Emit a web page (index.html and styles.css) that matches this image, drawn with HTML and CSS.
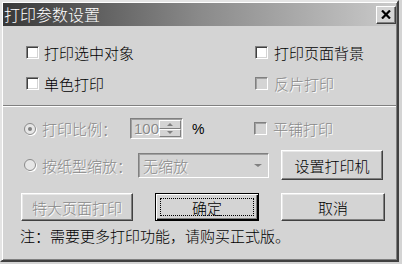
FILE: index.html
```
<!DOCTYPE html>
<html>
<head>
    <link rel="stylesheet" href="styles.css">
</head>
<body>
    <div class="window">
        <div class="titlebar">
            <span class="title">打印参数设置</span>
            <span class="close">
                <svg width="10" height="9" viewBox="0 0 10 9">
                    <path d="M1 0.5 L9 8.5 M9 0.5 L1 8.5" stroke="#000" stroke-width="2.2" fill="none"/>
                </svg>
            </span>
        </div>

        <div class="content">
            <div class="opts">
                <label class="check"><span class="box"></span>打印选中对象</label>
                <label class="check right"><span class="box"></span>打印页面背景</label>
                <label class="check"><span class="box"></span>单色打印</label>
                <label class="check right disabled"><span class="box off"></span>反片打印</label>
            </div>

            <div class="sep"></div>

            <div class="scale">
                <div class="row">
                    <span class="radio"><span class="dot"></span></span>
                    <span class="lbl lbl-ratio disabled">打印比例：</span>
                    <div class="spin">
                        <span class="spin-val">100</span>
                        <span class="spin-btns">
                            <span class="spin-btn"><i class="tri up"></i></span>
                            <span class="spin-btn"><i class="tri down"></i></span>
                        </span>
                    </div>
                    <span class="pct">%</span>
                    <label class="check right disabled"><span class="box off"></span>平铺打印</label>
                </div>
                <div class="row">
                    <span class="radio"></span>
                    <span class="lbl lbl-paper disabled">按纸型缩放：</span>
                    <div class="select">
                        <span class="select-val">无缩放</span>
                        <i class="tri down caret"></i>
                    </div>
                    <span class="btn btn-printer">设置打印机</span>
                </div>
            </div>

            <div class="actions">
                <span class="btn btn-big disabled">特大页面打印</span>
                <span class="btn btn-ok default"><span class="focus">确定</span></span>
                <span class="btn btn-cancel">取消</span>
            </div>

            <p class="note">注：需要更多打印功能，请购买正式版。</p>
        </div>
    </div>
</body>
</html>
```

FILE: styles.css
```
body {
    margin: 0;
    background: #d4d4d4;
    color: #000;
    font-family: "Noto Sans CJK SC", "Noto Sans", sans-serif;
    font-size: 15px;
    font-weight: 300;
}

.window {
    width: 399px;
    height: 262px;
    box-sizing: border-box;
    border: 2px solid;
    border-color: #e4e4e4 #404040 #404040 #e4e4e4;
    box-shadow: inset 1px 1px #fff, inset -1px -1px #808080;
    padding: 1px;
    display: flex;
    flex-direction: column;
}

/* title bar */
.titlebar {
    height: 23px;
    background: linear-gradient(to right, #383838, #8a8a8a 50%, #cacaca);
    display: flex;
    align-items: center;
    justify-content: space-between;
}

.title {
    color: #fff;
    padding-left: 1px;
    line-height: 23px;
    font-size: 16px;
}

.close {
    width: 20px;
    height: 18px;
    box-sizing: border-box;
    background: #d4d4d4;
    border: 1px solid;
    border-color: #fff #404040 #404040 #fff;
    box-shadow: inset -1px -1px #808080;
    display: flex;
    align-items: center;
    justify-content: center;
}

.content {
    flex: 1;
    padding-top: 11px;
}

/* checkboxes */
.opts {
    display: grid;
    grid-template-columns: 229px 1fr;
    grid-auto-rows: 31px;
    padding-left: 23px;
}

.check {
    display: flex;
    align-items: center;
    gap: 5px;
}

.check.right {
    gap: 6px;
}

.box {
    width: 13px;
    height: 13px;
    box-sizing: border-box;
    background: #fff;
    border: 1px solid;
    border-color: #808080 #fff #fff #808080;
    box-shadow: inset 1px 1px #404040, inset -1px -1px #d4d4d4;
}

.box.off {
    background: #d4d4d4;
    box-shadow: inset 1px 1px #a0a0a0;
}

.disabled {
    color: #8a8a8a;
    text-shadow: 1px 1px #fff;
}

.sep {
    margin-top: 6px;
    border-top: 1px solid #808080;
    border-bottom: 1px solid #fff;
}

/* scale block */
.scale {
    padding-top: 5px;
    display: flex;
    flex-direction: column;
    gap: 3px;
}

.row {
    display: flex;
    align-items: center;
    padding-left: 21px;
    height: 33px;
}

.row + .row {
    height: 34px;
}

.radio {
    width: 12px;
    height: 12px;
    box-sizing: border-box;
    border-radius: 50%;
    border: 1px solid #8a8a8a;
    background: #e6e6e6;
    box-shadow: 1px 1px #fff;
    display: flex;
    align-items: center;
    justify-content: center;
    margin-right: 6px;
}

.dot {
    width: 4px;
    height: 4px;
    border-radius: 50%;
    background: #808080;
}

.lbl-ratio {
    width: 88px;
}

.lbl-paper {
    width: 96px;
}

.spin {
    width: 53px;
    height: 21px;
    box-sizing: border-box;
    border: 1px solid;
    border-color: #808080 #fff #fff #808080;
    box-shadow: inset 1px 1px #a0a0a0;
    display: flex;
    align-items: center;
    justify-content: space-between;
    padding: 1px 1px 1px 3px;
}

.spin-val {
    color: #8a8a8a;
    text-shadow: 1px 1px #fff;
    font-family: "Liberation Sans", sans-serif;
    font-size: 15px;
    font-weight: 400;
}

.spin-btns {
    display: flex;
    flex-direction: column;
    width: 23px;
    height: 17px;
}

.spin-btn {
    flex: 1;
    box-sizing: border-box;
    border: 1px solid;
    border-color: #fff #808080 #808080 #fff;
    display: flex;
    align-items: center;
    justify-content: center;
}

.tri {
    width: 0;
    height: 0;
    border-left: 3px solid transparent;
    border-right: 3px solid transparent;
}

.tri.up {
    border-bottom: 3px solid #808080;
}

.tri.down {
    border-top: 3px solid #808080;
}

.pct {
    width: 62px;
    margin-left: 9px;
    font-family: "Liberation Sans", sans-serif;
    font-size: 14px;
    font-weight: 400;
}

.select {
    width: 131px;
    height: 25px;
    box-sizing: border-box;
    border: 1px solid;
    border-color: #808080 #fff #fff #808080;
    box-shadow: inset 1px 1px #a0a0a0;
    display: flex;
    align-items: center;
    justify-content: space-between;
    padding: 0 6px 0 4px;
}

.select-val {
    color: #8a8a8a;
    text-shadow: 1px 1px #fff;
}

.caret {
    border-left-width: 4px;
    border-right-width: 4px;
    border-top-width: 5px;
}

/* buttons */
.btn {
    box-sizing: border-box;
    background: #d4d4d4;
    border: 1px solid;
    border-color: #fff #404040 #404040 #fff;
    box-shadow: inset -1px -1px #808080, inset 1px 1px #e8e8e8;
    display: flex;
    align-items: center;
    justify-content: center;
    height: 28px;
}

.btn-printer {
    width: 102px;
    height: 30px;
    margin-left: 12px;
}

.actions {
    margin-top: 11px;
    padding-left: 18px;
    display: flex;
    gap: 22px;
}

.btn-big {
    width: 112px;
}

.btn-ok {
    width: 104px;
}

.btn-cancel {
    width: 104px;
}

.btn.default {
    border: 1px solid #000;
    box-shadow: inset 1px 1px #fff, inset -1px -1px #000, inset -2px -2px #808080;
}

.focus {
    width: calc(100% - 8px);
    height: calc(100% - 8px);
    box-sizing: border-box;
    border: 1px dotted #000;
    display: flex;
    align-items: center;
    justify-content: center;
}

.note {
    margin: 5px 0 0;
    padding-left: 17px;
    line-height: 20px;
}
```
